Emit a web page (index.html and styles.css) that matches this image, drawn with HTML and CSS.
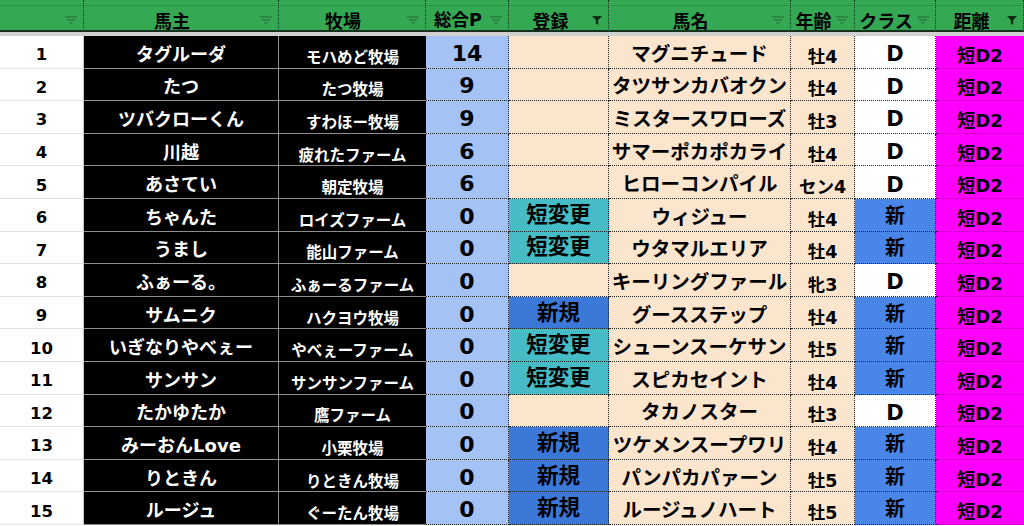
FILE: index.html
```html
<!DOCTYPE html>
<html lang="ja">
<head>
<meta charset="utf-8">
<title>Sheet</title>
<link rel="stylesheet" href="styles.css">
</head>
<body>
<div class="sheet">
  <div class="head">
    <div class="hc"><span class="ht"></span><svg class="fi" viewBox="0 0 12 8"><path d="M0 1h12M2 4h8M4.5 7h3"/></svg></div>
    <div class="hc"><span class="ht">馬主</span><svg class="fi" viewBox="0 0 12 8"><path d="M0 1h12M2 4h8M4.5 7h3"/></svg></div>
    <div class="hc"><span class="ht">牧場</span><svg class="fi" viewBox="0 0 12 8"><path d="M0 1h12M2 4h8M4.5 7h3"/></svg></div>
    <div class="hc"><span class="ht">総合P</span><svg class="fi" viewBox="0 0 12 8"><path d="M0 1h12M2 4h8M4.5 7h3"/></svg></div>
    <div class="hc"><span class="ht">登録</span><svg class="ff" viewBox="0 0 10 9"><path d="M0 0h10L6.2 4.2V9L3.8 7.6V4.2z"/></svg></div>
    <div class="hc"><span class="ht">馬名</span><svg class="fi" viewBox="0 0 12 8"><path d="M0 1h12M2 4h8M4.5 7h3"/></svg></div>
    <div class="hc"><span class="ht">年齢</span><svg class="fi" viewBox="0 0 12 8"><path d="M0 1h12M2 4h8M4.5 7h3"/></svg></div>
    <div class="hc"><span class="ht">クラス</span><svg class="fi" viewBox="0 0 12 8"><path d="M0 1h12M2 4h8M4.5 7h3"/></svg></div>
    <div class="hc"><span class="ht">距離</span><svg class="ff" viewBox="0 0 10 9"><path d="M0 0h10L6.2 4.2V9L3.8 7.6V4.2z"/></svg></div>
  </div>
  <div class="band"></div>
  <div class="body">
    <div class="c rn">1</div><div class="c own">タグルーダ</div><div class="c farm">モハめど牧場</div><div class="c pts">14</div><div class="c reg"></div><div class="c horse">マグニチュード</div><div class="c age">牡4</div><div class="c cls">D</div><div class="c dist">短D2</div>
    <div class="c rn">2</div><div class="c own">たつ</div><div class="c farm">たつ牧場</div><div class="c pts">9</div><div class="c reg"></div><div class="c horse">タツサンカバオクン</div><div class="c age">牡4</div><div class="c cls">D</div><div class="c dist">短D2</div>
    <div class="c rn">3</div><div class="c own">ツバクローくん</div><div class="c farm">すわほー牧場</div><div class="c pts">9</div><div class="c reg"></div><div class="c horse">ミスタースワローズ</div><div class="c age">牡3</div><div class="c cls">D</div><div class="c dist">短D2</div>
    <div class="c rn">4</div><div class="c own">川越</div><div class="c farm">疲れたファーム</div><div class="c pts">6</div><div class="c reg"></div><div class="c horse">サマーポカポカライ</div><div class="c age">牡4</div><div class="c cls">D</div><div class="c dist">短D2</div>
    <div class="c rn">5</div><div class="c own">あさてい</div><div class="c farm">朝定牧場</div><div class="c pts">6</div><div class="c reg"></div><div class="c horse">ヒローコンパイル</div><div class="c age">セン4</div><div class="c cls">D</div><div class="c dist">短D2</div>
    <div class="c rn">6</div><div class="c own">ちゃんた</div><div class="c farm">ロイズファーム</div><div class="c pts">0</div><div class="c reg chg">短変更</div><div class="c horse">ウィジュー</div><div class="c age">牡4</div><div class="c cls new">新</div><div class="c dist">短D2</div>
    <div class="c rn">7</div><div class="c own">うまし</div><div class="c farm">能山ファーム</div><div class="c pts">0</div><div class="c reg chg">短変更</div><div class="c horse">ウタマルエリア</div><div class="c age">牡4</div><div class="c cls new">新</div><div class="c dist">短D2</div>
    <div class="c rn">8</div><div class="c own">ふぁーる。</div><div class="c farm">ふぁーるファーム</div><div class="c pts">0</div><div class="c reg"></div><div class="c horse">キーリングファール</div><div class="c age">牝3</div><div class="c cls">D</div><div class="c dist">短D2</div>
    <div class="c rn">9</div><div class="c own">サムニク</div><div class="c farm">ハクヨウ牧場</div><div class="c pts">0</div><div class="c reg nw">新規</div><div class="c horse">グースステップ</div><div class="c age">牡4</div><div class="c cls new">新</div><div class="c dist">短D2</div>
    <div class="c rn">10</div><div class="c own">いぎなりやべぇー</div><div class="c farm">やべぇーファーム</div><div class="c pts">0</div><div class="c reg chg">短変更</div><div class="c horse">シューンスーケサン</div><div class="c age">牡5</div><div class="c cls new">新</div><div class="c dist">短D2</div>
    <div class="c rn">11</div><div class="c own">サンサン</div><div class="c farm">サンサンファーム</div><div class="c pts">0</div><div class="c reg chg">短変更</div><div class="c horse">スピカセイント</div><div class="c age">牡4</div><div class="c cls new">新</div><div class="c dist">短D2</div>
    <div class="c rn">12</div><div class="c own">たかゆたか</div><div class="c farm">鷹ファーム</div><div class="c pts">0</div><div class="c reg"></div><div class="c horse">タカノスター</div><div class="c age">牡3</div><div class="c cls">D</div><div class="c dist">短D2</div>
    <div class="c rn">13</div><div class="c own">みーおんLove</div><div class="c farm">小栗牧場</div><div class="c pts">0</div><div class="c reg nw">新規</div><div class="c horse">ツケメンスープワリ</div><div class="c age">牡4</div><div class="c cls new">新</div><div class="c dist">短D2</div>
    <div class="c rn">14</div><div class="c own">りときん</div><div class="c farm">りときん牧場</div><div class="c pts">0</div><div class="c reg nw">新規</div><div class="c horse">パンパカパァーン</div><div class="c age">牡5</div><div class="c cls new">新</div><div class="c dist">短D2</div>
    <div class="c rn">15</div><div class="c own">ルージュ</div><div class="c farm">ぐーたん牧場</div><div class="c pts">0</div><div class="c reg nw">新規</div><div class="c horse">ルージュノハート</div><div class="c age">牡5</div><div class="c cls new">新</div><div class="c dist">短D2</div>
  </div>
</div>
</body>
</html>
```
FILE: styles.css
```css
html, body {
  margin: 0;
  padding: 0;
  background: #ffffff;
}
body {
  width: 1024px;
  height: 526px;
  overflow: hidden;
  font-family: "DejaVu Sans", "Noto Sans CJK JP", sans-serif;
  font-weight: bold;
  color: #000;
}
.sheet {
  width: 1024px;
}
.head, .body {
  display: grid;
  grid-template-columns: 84px 195px 147px 83px 100px 182px 64px 81px 88px;
}
.hc {
  box-sizing: border-box;
  height: 32px;
  background: linear-gradient(#2a9447, #2a9447) left 5px / 100% 1px no-repeat, #34a853;
  border-right: 1px dotted #12331c;
  border-bottom: 2px solid #15301c;
  display: flex;
  align-items: flex-end;
  padding: 0 6px 0 0;
}
.ht {
  flex: 1;
  text-align: center;
  font-size: 18px;
  line-height: 20px;
  white-space: nowrap;
  font-family: "Noto Sans CJK JP", sans-serif;
}
.hc:nth-child(4) .ht {
  font-family: "DejaVu Sans", "Noto Sans CJK JP", sans-serif;
  font-size: 17.5px;
}
.fi {
  width: 12px;
  height: 8px;
  margin-bottom: 6px;
  fill: none;
  stroke: rgba(20, 50, 30, 0.55);
  stroke-width: 1.1;
}
.ff {
  width: 10px;
  height: 9px;
  margin-bottom: 5px;
  fill: #0f2d17;
}
.band {
  height: 4px;
  background: #d0d0d0;
}
.body {
  grid-auto-rows: 32.6px;
}
.c {
  box-sizing: border-box;
  display: flex;
  align-items: center;
  justify-content: center;
  white-space: nowrap;
  line-height: 18px;
  border-right: 1px dotted #222;
  border-bottom: 1px dotted #222;
}
.rn {
  background: #fff;
  border-right: 1px solid #c4c4c4;
  border-bottom: 1px solid #e2e2e2;
  font-size: 16.5px;
  padding-top: 7px;
}
.own, .farm {
  background: #000;
  color: #fff;
  border-right: 1px solid #8e8e8e;
  border-bottom: 1px solid #8e8e8e;
}
.own {
  font-size: 18px;
  padding-top: 6px;
}
.farm {
  font-size: 15.5px;
  padding-top: 12px;
  border-right: none;
}
.pts {
  background: #a4c2f4;
  font-size: 22px;
  padding-top: 4px;
}
.reg {
  background: #fce5cd;
  font-size: 21.5px;
}
.reg.chg {
  background: #46bdc6;
}
.reg.nw {
  background: #3c78d8;
}
.horse {
  background: #fce5cd;
  font-size: 19.5px;
  padding-top: 6px;
}
.age {
  background: #fce5cd;
  font-size: 17.5px;
  padding-top: 10px;
}
.cls {
  background: #fff;
  font-size: 21px;
  padding-top: 5px;
}
.cls.new {
  background: #4a86e8;
  font-size: 20px;
  padding-top: 2px;
}
.dist {
  background: #ff00ff;
  font-size: 18px;
  padding-top: 8px;
  border-right: none;
}
```
